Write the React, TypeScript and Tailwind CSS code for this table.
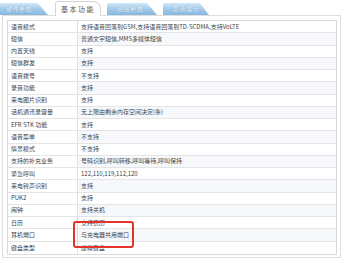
import React from "react";

const rows: [string, string][] = [
  ["语音模式", "支持语音回落到GSM,支持语音回落到TD-SCDMA,支持VoLTE"],
  ["短信", "普通文字短信,MMS多媒体短信"],
  ["内置天线", "支持"],
  ["短信群发", "支持"],
  ["语音拨号", "不支持"],
  ["录音功能", "支持"],
  ["来电图片识别", "支持"],
  ["话机通讯录容量", "无上限由剩余内存空间决定(条)"],
  ["EFR STK 功能", "支持"],
  ["语音菜单", "不支持"],
  ["情景模式", "不支持"],
  ["支持的补充业务", "号码识别,呼叫转移,呼叫等待,呼叫保持"],
  ["紧急呼叫", "122,110,119,112,120"],
  ["来电铃声识别", "支持"],
  ["PUK2", "支持"],
  ["闹钟", "支持关机"],
  ["日历", "支持农历"],
  ["耳机端口", "与充电器共用端口"],
  ["键盘类型", "虚拟键盘"],
];

function BlueTab({ label, className }: { label: string; className: string }) {
  return (
    <div
      className={
        "h-[12px] bg-gradient-to-b from-[#d3e8f7] via-[#a2cbea] to-[#86b8de] [clip-path:polygon(0_0,80%_0,100%_100%,0_100%)] rounded-tl-[2px] flex items-center pl-[10px] " +
        className
      }
    >
      <span className="text-[6px] leading-none text-[#f2f8fd] tracking-[0.5px] [text-shadow:0_0_1px_#4f88b5]">
        {label}
      </span>
    </div>
  );
}

export default function App() {
  return (
    <div
      className="relative w-[354px] h-[261px] bg-white overflow-hidden text-[#444]"
      style={{ fontFamily: '"Noto Sans CJK SC", "Noto Sans", sans-serif' }}
    >
      <div className="flex items-end h-[15px]">
        <BlueTab label="硬件参数" className="w-[52px] -ml-[4px]" />
        <div className="ml-[7px] w-[46px] h-[15px] bg-white border border-b-0 border-[#d4d4d4] rounded-tl-[3px] rounded-tr-[8px] flex items-center justify-center relative z-10 -mb-px">
          <span className="text-[7px] leading-none text-[#555] tracking-[1.5px]">基本功能</span>
        </div>
        <BlueTab label="网络参数" className="w-[50px] ml-[6px]" />
        <BlueTab label="影音娱乐" className="w-[46px] ml-[6px]" />
      </div>
      <div className="ml-[2px] w-[339px] h-[243px] border border-[#dedede] p-[4px] bg-white">
        <div className="border border-[#dadada] w-[330px]">
          {rows.map(([k, v], i) => (
            <div
              key={k}
              className={
                "flex h-[12.25px] border-b border-[#e4e4e4] last:border-b-0 text-[6px] leading-none items-stretch " +
                (i % 2 === 1 ? "bg-[#f7f8fb]" : "bg-white")
              }
            >
              <div className="w-[70px] border-r border-[#e0e0e0] flex items-center pl-[3px] bg-white">
                {k}
              </div>
              <div className="flex-1 flex items-center pl-[3px] whitespace-nowrap">{v}</div>
            </div>
          ))}
        </div>
      </div>
      <div className="absolute left-[73px] top-[221px] w-[61px] h-[27px] border-2 border-[#e5322b] rounded-[3px]" />
    </div>
  );
}
